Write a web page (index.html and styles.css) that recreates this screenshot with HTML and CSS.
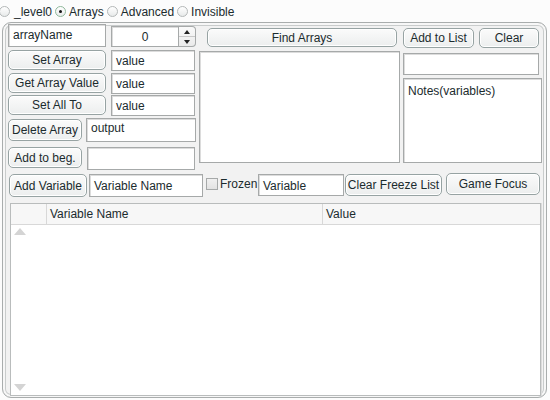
FILE: index.html
```html
<!DOCTYPE html>
<html>
<head>
<meta charset="utf-8">
<link rel="stylesheet" href="styles.css">
</head>
<body>
<div class="radios">
  <span class="radio first"></span><span class="rlabel">_level0</span>
  <span class="radio on"></span><span class="rlabel">Arrays</span>
  <span class="radio"></span><span class="rlabel">Advanced</span>
  <span class="radio"></span><span class="rlabel">Invisible</span>
</div>
<div class="panel">
  <div class="top">
    <div class="left">
      <div class="row r1">
        <div class="input w98 h23">arrayName</div>
        <div class="spinner">
          <div class="input spin-field">0</div>
          <div class="spin-btns">
            <div class="spin-up"><span class="tri-up"></span></div>
            <div class="spin-down"><span class="tri-down"></span></div>
          </div>
        </div>
      </div>
      <div class="row r2">
        <div class="btn w98 h20">Set Array</div>
        <div class="input w84 h21">value</div>
      </div>
      <div class="row r3">
        <div class="btn w98 h20">Get Array Value</div>
        <div class="input w84 h21">value</div>
      </div>
      <div class="row r4">
        <div class="btn w98 h20">Set All To</div>
        <div class="input w84 h21">value</div>
      </div>
      <div class="row r5">
        <div class="btn b-del">Delete Array</div>
        <div class="input in-out">output</div>
      </div>
      <div class="row r6">
        <div class="btn b-beg">Add to beg.</div>
        <div class="input in-beg"></div>
      </div>
    </div>
    <div class="mid">
      <div class="btn b-find">Find Arrays</div>
      <div class="listbox"></div>
    </div>
    <div class="right">
      <div class="rbtns">
        <div class="btn b-add">Add to List</div>
        <div class="btn b-clear">Clear</div>
      </div>
      <div class="input in-small"></div>
      <div class="input notes">Notes(variables)</div>
    </div>
  </div>
  <div class="vars">
    <div class="btn b-addvar">Add Variable</div>
    <div class="input in-varname">Variable Name</div>
    <span class="check"></span><span class="frozen">Frozen</span>
    <div class="input in-var">Variable</div>
    <div class="btn b-cfl">Clear Freeze List</div>
    <div class="btn b-gf">Game Focus</div>
  </div>
  <div class="table">
    <div class="thead">
      <div class="th c0"></div>
      <div class="th c1">Variable Name</div>
      <div class="th c2">Value</div>
    </div>
    <div class="tbody">
      <span class="sc-up"></span>
      <span class="sc-down"></span>
    </div>
  </div>
</div>
</body>
</html>
```

FILE: styles.css
```css
* { box-sizing: border-box; }
html, body { margin: 0; padding: 0; }
body {
  width: 550px;
  height: 400px;
  background: #fcfcfc;
  font-family: "Liberation Sans", Arial, sans-serif;
  font-size: 12px;
  color: #1b2b2e;
  overflow: hidden;
}
.radios {
  height: 22px;
  display: flex;
  align-items: center;
  padding-top: 1px;
}
.radio {
  width: 11px;
  height: 11px;
  border-radius: 50%;
  border: 1px solid #b4b8b8;
  background: linear-gradient(#ffffff, #e8eaea);
  margin: 0 2px 0 3px;
  position: relative;
  flex: none;
}
.radio.first { margin-left: -1px; margin-right: 3px; }
.radio.on { border-color: #8fb89a; }
.radio.on::after {
  content: "";
  position: absolute;
  left: 3px; top: 3px;
  width: 3px; height: 3px;
  border-radius: 50%;
  background: #111;
}
.rlabel { margin-left: 1px; }

.panel {
  margin: 0 3px 0 2px;
  height: 376px;
  border: 1px solid #a9adad;
  border-radius: 9px;
  background: #f2f2f2;
  box-shadow: inset 0 0 0 2px #f7f7f7, inset 0 0 0 3px #c9cccc;
  padding: 1px 0 0 5px;
}

.btn {
  border: 1px solid #97a3a3;
  border-radius: 5px;
  background: linear-gradient(#fbfbfb, #eceeee);
  box-shadow: inset 0 0 0 1px #ffffff;
  display: flex;
  align-items: center;
  justify-content: center;
  white-space: nowrap;
  flex: none;
}
.input {
  background: #fff;
  border: 1px solid #a6a9a9;
  box-shadow: inset 1px 1px 0 #dcdcdc;
  padding: 3px 0 0 4px;
  white-space: nowrap;
  flex: none;
}

.w98 { width: 98px; }
.w84 { width: 84px; }
.h20 { height: 20px; }
.h21 { height: 21px; }
.h23 { height: 23px; }

.top { display: flex; height: 146px; }
.left { width: 190px; display: flex; flex-direction: column; }
.row { display: flex; gap: 5px; }
.r1 { height: 23px; }
.r2 { margin-top: 3px; }
.r3 { margin-top: 2px; }
.r4 { margin-top: 1px; }
.r5 { margin-top: 2px; gap: 4px; }
.r6 { margin-top: 5px; }

.spinner { display: flex; margin-top: 2px; height: 21px; }
.spin-field { width: 68px; height: 21px; text-align: center; padding-left: 0; }
.spin-btns {
  width: 17px; height: 21px;
  border: 1px solid #a6a9a9;
  border-left: none;
  border-radius: 0 4px 4px 0;
  background: linear-gradient(#fafafa, #eaeaea);
  display: flex; flex-direction: column;
}
.spin-up, .spin-down { flex: 1; display: flex; align-items: center; justify-content: center; }
.spin-up { border-bottom: 1px solid #c8c8c8; }
.tri-up { width: 0; height: 0; border-left: 3px solid transparent; border-right: 3px solid transparent; border-bottom: 4px solid #222; }
.tri-down { width: 0; height: 0; border-left: 3px solid transparent; border-right: 3px solid transparent; border-top: 4px solid #222; }

.b-del { width: 74px; height: 22px; margin-top: 1px; }
.in-out { width: 110px; height: 24px; padding-top: 2px; }
.b-beg { width: 74px; height: 21px; }
.in-beg { width: 108px; height: 23px; }

.mid { width: 204px; display: flex; flex-direction: column; margin-left: 1px; }
.b-find { width: 190px; height: 19px; margin: 4px 0 0 8px; }
.listbox {
  width: 201px; height: 112px; margin-top: 4px;
  background: #fff;
  border: 1px solid #a6a9a9;
  box-shadow: inset 1px 1px 0 #dcdcdc;
}
.right { display: flex; flex-direction: column; }
.rbtns { display: flex; gap: 5px; margin-top: 4px; }
.b-add { width: 71px; height: 20px; }
.b-clear { width: 60px; height: 20px; }
.in-small { width: 136px; height: 22px; margin-top: 5px; }
.notes { width: 139px; height: 85px; margin-top: 3px; padding-top: 5px; }

.vars { display: flex; align-items: flex-start; margin-top: 4px; height: 24px; }
.b-addvar { width: 78px; height: 23px; margin-left: 1px; }
.in-varname { width: 114px; height: 23px; margin-left: 2px; padding-top: 4px; }
.check {
  width: 12px; height: 12px; margin: 4px 0 0 3px;
  border: 1px solid #a6a9a9;
  background: linear-gradient(#f0f0f0, #e2e2e2);
  flex: none;
}
.frozen { margin: 3px 0 0 2px; width: 36px; }
.in-var { width: 86px; height: 22px; margin-left: 2px; padding-top: 4px; }
.b-cfl { width: 97px; height: 22px; margin-left: 1px; }
.b-gf { width: 94px; height: 22px; margin-left: 4px; margin-top: -1px; }

.table {
  margin: 5px 0 0 2px;
  width: 531px;
  height: 193px;
  border: 1px solid #b9bcbc;
  box-shadow: 1px 0 0 #dcdcdc;
  background: #fff;
  display: flex;
  flex-direction: column;
}
.thead { display: flex; height: 21px; background: #f7f7f7; border-bottom: 1px solid #d8d8d8; }
.th { padding: 3px 0 0 3px; border-right: 1px solid #d8d8d8; }
.c0 { width: 36px; }
.c1 { width: 276px; }
.c2 { flex: 1; border-right: none; }
.tbody { flex: 1; position: relative; }
.sc-up {
  position: absolute; left: 3px; top: 3px;
  width: 0; height: 0;
  border-left: 6px solid transparent; border-right: 6px solid transparent;
  border-bottom: 7px solid #d4d4d4;
}
.sc-down {
  position: absolute; left: 3px; bottom: 4px;
  width: 0; height: 0;
  border-left: 6px solid transparent; border-right: 6px solid transparent;
  border-top: 7px solid #d4d4d4;
}
```
